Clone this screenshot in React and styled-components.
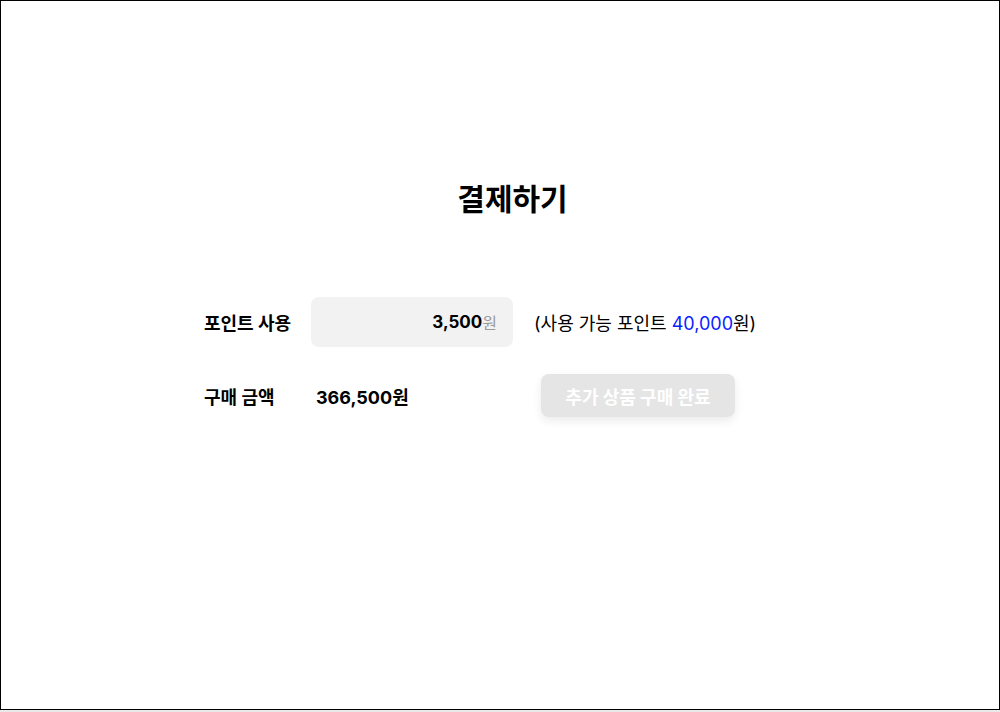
import React from "react";
import styled, { createGlobalStyle } from "styled-components";

const Global = createGlobalStyle`
  html, body { margin: 0; padding: 0; background: #e9e9e9; }
  body { font-family: Inter, "Noto Sans CJK KR", sans-serif; color: #000; }
  * { box-sizing: border-box; }
`;

const Frame = styled.div`
  width: 1000px;
  height: 710px;
  border: 1px solid #000;
  background: #fff;
  display: flex;
  flex-direction: column;
  padding-top: 178px;
`;

const Title = styled.h1`
  margin: 0 0 78px;
  padding-left: 25px;
  text-align: center;
  font-size: 30px;
  line-height: 40px;
  font-weight: 700;
`;

const Form = styled.div`
  display: flex;
  flex-direction: column;
  gap: 27px;
  padding-left: 203px;
`;

const Row = styled.div`
  display: flex;
  align-items: center;
`;

const Label = styled.div`
  width: 107px;
  font-size: 18px;
  font-weight: 700;
`;

const InputBox = styled.div`
  width: 202px;
  height: 50px;
  border-radius: 8px;
  background: #f2f2f2;
  display: flex;
  align-items: center;
  justify-content: flex-end;
  padding-right: 16px;
  font-size: 16px;
`;

const Strong = styled.span`
  font-weight: 700;
  font-size: 17px;
`;

const Unit = styled.span`
  color: #9a9a9a;
`;

const Available = styled.div`
  margin-left: 21px;
  font-size: 18px;
`;

const Blue = styled.span`
  color: #0a1eff;
`;

const Amount = styled.div`
  width: 230px;
  padding-left: 5px;
  font-size: 18px;
  font-weight: 700;
`;

const Button = styled.button`
  width: 194px;
  height: 43px;
  border: none;
  border-radius: 8px;
  background: #e5e5e5;
  color: #fff;
  font-family: inherit;
  font-size: 18px;
  font-weight: 700;
  box-shadow: 0 4px 10px rgba(0, 0, 0, 0.08);
  cursor: pointer;
`;

export default function App() {
  return (
    <>
      <Global />
      <Frame>
        <Title>결제하기</Title>
        <Form>
          <Row>
            <Label>포인트 사용</Label>
            <InputBox>
              <Strong>3,500</Strong>
              <Unit>원</Unit>
            </InputBox>
            <Available>
              (사용 가능 포인트 <Blue>40,000</Blue>원)
            </Available>
          </Row>
          <Row>
            <Label>구매 금액</Label>
            <Amount>366,500원</Amount>
            <Button>추가 상품 구매 완료</Button>
          </Row>
        </Form>
      </Frame>
    </>
  );
}
